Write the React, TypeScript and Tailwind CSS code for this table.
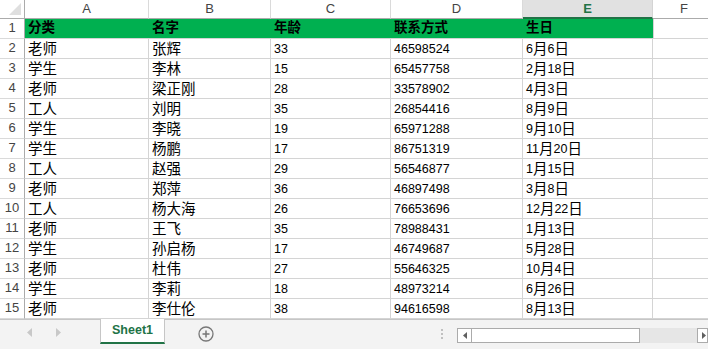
import React from 'react';

const rows: string[][] = [
  ['老师', '张辉', '33', '46598524', '6月6日'],
  ['学生', '李林', '15', '65457758', '2月18日'],
  ['老师', '梁正刚', '28', '33578902', '4月3日'],
  ['工人', '刘明', '35', '26854416', '8月9日'],
  ['学生', '李晓', '19', '65971288', '9月10日'],
  ['学生', '杨鹏', '17', '86751319', '11月20日'],
  ['工人', '赵强', '29', '56546877', '1月15日'],
  ['老师', '郑萍', '36', '46897498', '3月8日'],
  ['工人', '杨大海', '26', '76653696', '12月22日'],
  ['老师', '王飞', '35', '78988431', '1月13日'],
  ['学生', '孙启杨', '17', '46749687', '5月28日'],
  ['老师', '杜伟', '27', '55646325', '10月4日'],
  ['学生', '李莉', '18', '48973214', '6月26日'],
  ['老师', '李仕伦', '38', '94616598', '8月13日'],
];

const headers = ['分类', '名字', '年龄', '联系方式', '生日'];
const widths = ['w-[124px]', 'w-[122px]', 'w-[120px]', 'w-[132px]', 'w-[130px]'];
const letters = ['A', 'B', 'C', 'D', 'E'];

const font = { fontFamily: '"Liberation Sans", "Noto Sans CJK SC", sans-serif' };

// split text so digits use latin font size and CJK a bit larger
function CellText({ text }: { text: string }) {
  const parts = text.match(/[0-9]+|[^0-9]+/g) || [];
  return (
    <>
      {parts.map((p, i) =>
        /[0-9]/.test(p) ? (
          <span key={i} className="text-[12.5px]">{p}</span>
        ) : (
          <span key={i} className="text-[14.5px]">{p}</span>
        )
      )}
    </>
  );
}

export default function App() {
  return (
    <div className="w-[708px] h-[349px] overflow-hidden bg-white flex flex-col text-black" style={font}>
      <div className="h-[319px] overflow-hidden">
        {/* column headers */}
        <div className="flex h-[19px]">
          <div className="w-[25px] shrink-0 border-r border-b border-[#ababab] bg-white relative">
            <div className="absolute right-[3px] bottom-[3px] w-0 h-0 border-l-[12px] border-l-transparent border-b-[12px] border-b-[#dfdfdf]" />
          </div>
          {letters.map((l, i) =>
            l === 'E' ? (
              <div key={l} className={`${widths[i]} shrink-0 border-r border-[#d4d4d4] bg-[#e1e1e1] border-b-2 border-b-[#217346] flex items-center justify-center text-[13px] font-bold text-[#217346]`}>
                {l}
              </div>
            ) : (
              <div key={l} className={`${widths[i]} shrink-0 border-r border-b border-r-[#dadada] border-b-[#ababab] flex items-center justify-center text-[13px] text-[#444]`}>
                {l}
              </div>
            )
          )}
          <div className="flex-1 border-b border-[#ababab] flex items-center pl-[27px] text-[13px] text-[#444]">F</div>
        </div>

        {/* row 1 */}
        <div className="flex h-[20px]">
          <div className="w-[25px] shrink-0 border-r border-b border-r-[#ababab] border-b-[#dadada] flex items-end justify-center pb-[1px] text-[13px] text-[#444]">1</div>
          <div className="flex bg-[#00b050] border-b border-[#d4d4d4]">
            {headers.map((h, i) => (
              <div key={h} className={`${widths[i]} shrink-0 flex items-end pl-[3px] pb-[1px] text-[13.5px] font-bold leading-[18px]`}>
                {h}
              </div>
            ))}
          </div>
          <div className="flex-1 border-b border-l border-[#d4d4d4]" />
        </div>

        {rows.map((r, ri) => (
          <div key={ri} className="flex h-[20px]">
            <div className="w-[25px] shrink-0 border-r border-b border-r-[#ababab] border-b-[#dadada] flex items-end justify-center pb-[1px] text-[13px] text-[#444]">
              {ri + 2}
            </div>
            {r.map((c, ci) => (
              <div key={ci} className={`${widths[ci]} shrink-0 border-r border-b border-[#d4d4d4] flex items-end pl-[3px] leading-[18px] whitespace-nowrap`}>
                <CellText text={c} />
              </div>
            ))}
            <div className="flex-1 border-b border-[#d4d4d4]" />
          </div>
        ))}
      </div>

      {/* sheet tab bar */}
      <div className="h-[30px] bg-[#f3f3f3] border-t border-[#c6c6c6] flex items-start relative">
        <div className="w-[100px] shrink-0 h-full flex items-center pl-[27px] gap-[22px] pb-[4px]">
          <svg width="6" height="9" viewBox="0 0 6 9"><path d="M5 0 L0 4.5 L5 9 Z" fill="#c8c8c8" /></svg>
          <svg width="6" height="9" viewBox="0 0 6 9"><path d="M1 0 L6 4.5 L1 9 Z" fill="#c8c8c8" /></svg>
        </div>
        <div className="w-[65px] shrink-0 h-[25px] bg-white border-l border-r border-[#c6c6c6] border-b-[2px] border-b-[#217346] -mt-px flex items-center justify-center text-[12.5px] font-bold text-[#217346]">
          Sheet1
        </div>
        <div className="ml-[33px] mt-[6px] shrink-0">
          <svg width="16" height="16" viewBox="0 0 16 16">
            <circle cx="8" cy="8" r="7" fill="none" stroke="#777" strokeWidth="1.3" />
            <path d="M8 4.5 V11.5 M4.5 8 H11.5" stroke="#777" strokeWidth="1.5" />
          </svg>
        </div>
        <div className="ml-[227px] mt-[9px] shrink-0 flex flex-col gap-[2px]">
          <div className="w-[2px] h-[2px] bg-[#c0c0c0]" />
          <div className="w-[2px] h-[2px] bg-[#c0c0c0]" />
          <div className="w-[2px] h-[2px] bg-[#c0c0c0]" />
        </div>
        <div className="ml-[14px] mt-[8px] h-[15px] flex flex-1">
          <div className="w-[15px] shrink-0 h-full bg-white border border-[#ababab] flex items-center justify-center">
            <svg width="4" height="7" viewBox="0 0 4 7"><path d="M4 0 L0 3.5 L4 7 Z" fill="#606060" /></svg>
          </div>
          <div className="w-[168px] shrink-0 h-full bg-white border border-l-0 border-[#ababab]" />
          <div className="w-[57px] shrink-0 h-full bg-[#e6e6e6]" />
          <div className="flex-1 h-full bg-white border border-[#ababab] flex items-center pl-[4px]">
            <svg width="4" height="7" viewBox="0 0 4 7"><path d="M0 0 L4 3.5 L0 7 Z" fill="#606060" /></svg>
          </div>
        </div>
      </div>
    </div>
  );
}
